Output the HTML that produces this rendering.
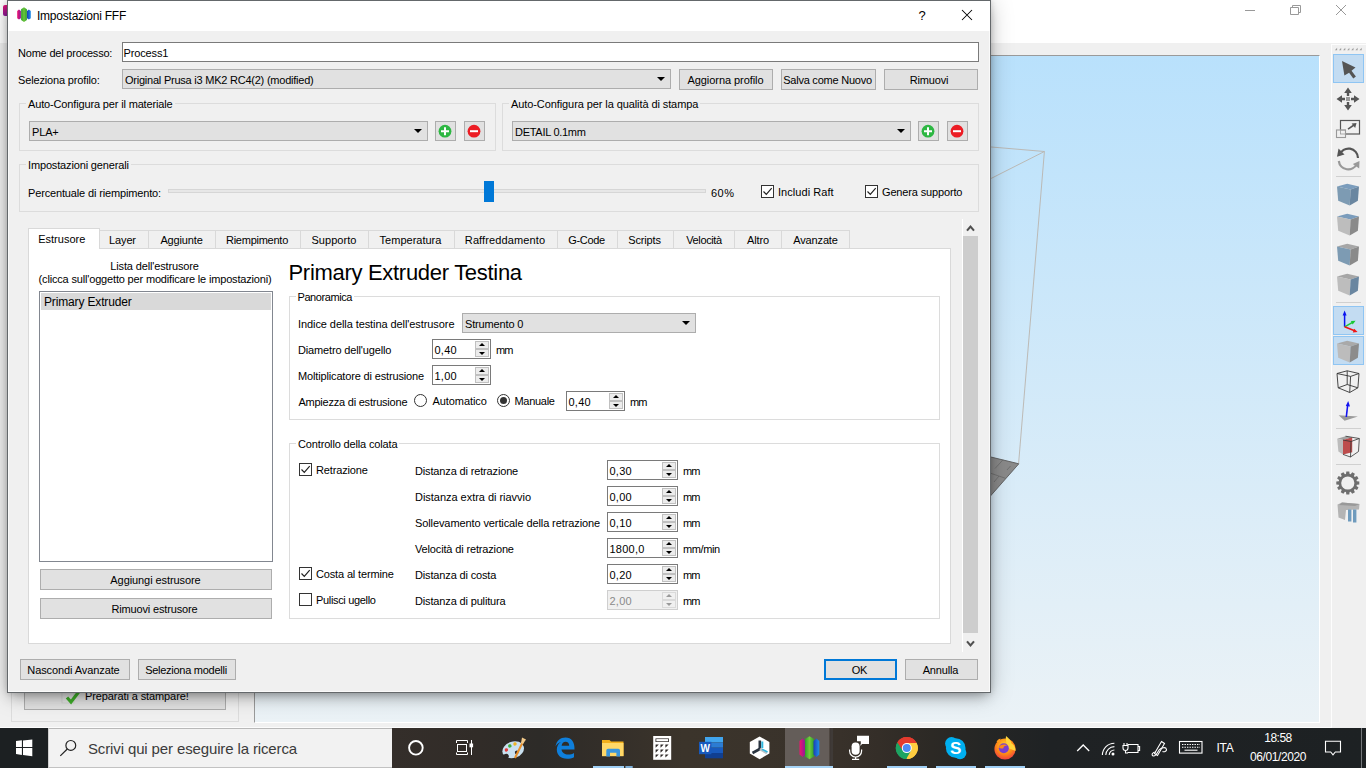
<!DOCTYPE html>
<html lang="it">
<head>
<meta charset="utf-8">
<title>Impostazioni FFF</title>
<style>
*{box-sizing:border-box;margin:0;padding:0}
html,body{width:1366px;height:768px;overflow:hidden;background:#f0f0f0}
body{font-family:"Liberation Sans",sans-serif;font-size:11px;letter-spacing:-0.15px;color:#000;position:relative}
.a{position:absolute}
.t{position:absolute;white-space:nowrap;line-height:14px;height:14px}
/* ---------- main window behind ---------- */
#mw-title{left:0;top:0;width:1366px;height:43px;background:#fff}
#mw-body{left:0;top:43px;width:1366px;height:685px;background:#f0f0f0;border-bottom:1px solid #fcfcfc}
#view{left:254px;top:55px;width:1066px;height:668px;border-top:1px solid #9a9a9a;border-left:1px solid #9a9a9a;border-right:1px solid #fff;border-bottom:1px solid #fff;background:linear-gradient(#b9e1fc,#ebf2f6)}
#rtb{left:1331px;top:44px;width:35px;height:684px;background:#f0f0f0;border-left:1px solid #fdfdfd;border-top:1px solid #fdfdfd}
.tbsel{position:absolute;left:1333px;width:31px;background:#c3dcf2;border:1px solid #8fc5f3}
.sep{position:absolute;left:1336px;width:26px;height:1px;background:#d2d2d2}
/* ---------- dialog ---------- */
#dlg{left:7px;top:0;width:984px;height:693px;border:1px solid #64686b;background:#f0f0f0;box-shadow:inset 0 0 0 1px #fafafa,0 0 6px rgba(0,0,0,.15),0 2px 22px rgba(0,0,0,.22),0 7px 12px -4px rgba(0,0,0,.25)}
#dlg-in{position:absolute;left:-8px;top:-1px;width:0;height:0}
#dlg-title{left:8px;top:1px;width:982px;height:30px;background:#fff}
.btn{position:absolute;height:21px;background:#e1e1e1;border:1px solid #adadad;text-align:center;line-height:19px;padding-top:1px;padding-right:2px;white-space:nowrap}
.combo{position:absolute;height:20px;background:#e1e1e1;border:1px solid #adadad;line-height:18px;padding-left:2px;padding-top:1px;white-space:nowrap}
.combo:after{content:"";position:absolute;right:5px;top:7px;border-left:4px solid transparent;border-right:4px solid transparent;border-top:4px solid #000}
.grp{position:absolute;border:1px solid #dcdcdc}
.grp>b{position:absolute;top:-7px;left:6px;font-weight:normal;background:#f0f0f0;padding:0 2px;line-height:14px;white-space:nowrap}
.wgrp>b{background:#fff}
.edit{position:absolute;height:20px;background:#fff;border:1px solid #7a7a7a;line-height:18px;padding-left:.6px;padding-top:1px;white-space:nowrap}
.spin{position:absolute;height:20px;background:#fff;border:1px solid #7a7a7a;line-height:18px;padding-left:1.5px;padding-top:1px;white-space:nowrap;letter-spacing:.25px}
.spin i{position:absolute;right:1px;width:14px;height:8px;background:#ececec;border:1px solid #c0c0c0}
.spin i.u{top:1px}
.spin i.d{top:9px}
.spin i.u:after{content:"";position:absolute;left:2.5px;top:1px;border-left:3.5px solid transparent;border-right:3.5px solid transparent;border-bottom:3.5px solid #000}
.spin i.d:after{content:"";position:absolute;left:2.5px;top:1.5px;border-left:3.5px solid transparent;border-right:3.5px solid transparent;border-top:3.5px solid #000}
.spin.dis{border-color:#cfcfcf;background:#f0f0f0;color:#8a8a8a}
.spin.dis i{background:#f0f0f0;border-color:#dadada}
.spin.dis i.u:after{border-bottom-color:#9a9a9a}
.spin.dis i.d:after{border-top-color:#9a9a9a}
.cb{position:absolute;width:13px;height:13px;background:#fff;border:1px solid #333}
.cb svg{position:absolute;left:0;top:0;width:11px;height:11px}
.rb{position:absolute;width:13px;height:13px;background:#fff;border:1px solid #333;border-radius:50%}
.rb.on:after{content:"";position:absolute;left:2px;top:2px;width:7px;height:7px;border-radius:50%;background:#333}
.tab{position:absolute;top:230px;height:19px;background:#f0f0f0;border:1px solid #d9d9d9;border-left:none;text-align:center;line-height:17px;padding-top:1px;white-space:nowrap}
.tab.sel{top:228px;height:21px;background:#fff;border-left:1px solid #d9d9d9;border-bottom:none;line-height:19px;z-index:2}
.ico{position:absolute;width:21px;height:20px;background:#e1e1e1;border:1px solid #adadad}
/* ---------- taskbar ---------- */
#tb{left:0;top:728px;width:1366px;height:40px;background:linear-gradient(90deg,#342e2a 0%,#342e2a 28.7%,#312c28 35%,#2d2b28 39.5%,#332e29 44%,#3b342b 50%,#3a332b 56%,#38312a 61.5%,#342e28 64.3%,#2c2925 68.2%,#252625 72%,#1f2224 76.9%,#1d2123 100%)}
#start{left:0;top:0;width:48px;height:40px;background:#1c2022}
#search{left:48px;top:0;width:344px;height:40px;background:#f2f2f2;border-top:1px solid #b8b8b8;border-bottom:1px solid #c2c2c2;border-left:1px solid #cfcfcf}
.ul{position:absolute;top:38px;height:2px;background:#8ec3ee}
.tbt{position:absolute;color:#fff;white-space:nowrap;font-size:12px;letter-spacing:-0.2px;text-align:center}
</style>
</head>
<body>
<!-- ================= main window (background) ================= -->
<div class="a" id="mw-title"></div>
<div class="a" id="mw-body"></div>
<div class="a" id="view"></div>
<div class="a" id="rtb"></div>
<svg class="a" style="left:1240px;top:0" width="126" height="30" viewBox="0 0 126 30"><g fill="none" stroke="#999" stroke-width="1">
<path d="M5 10.5H15"/><path d="M50.5 7.5H58.5V14.5H50.5Z"/><path d="M52.5 7.5V5.5H60.5V12.5H58.5"/><path d="M96 5L106 15M106 5L96 15"/></g></svg>
<div class="a" style="left:3px;top:5px;width:4px;height:11px;background:linear-gradient(#e0147a,#8a1a9a);border-radius:2px 0 0 2px"></div>
<div class="a" style="left:11px;top:560px;width:228px;height:162px;border:1px solid #dcdcdc"></div>
<div class="btn" style="left:24px;top:688px;width:202px;height:22px"></div>
<div class="t" style="left:85px;top:689px;letter-spacing:-0.1px">Preparati a stampare!</div>
<svg class="a" style="left:60px;top:688px" width="22" height="18" viewBox="0 0 22 18"><rect x="2" y="1" width="12" height="14" fill="#e4e4e4" stroke="#c8c8c8" stroke-width=".6"/><path d="M7 9.5 L11 14 L19 3.5" fill="none" stroke="#3fae2a" stroke-width="3.2"/></svg>


<svg class="a" style="left:0;top:0" width="1366" height="728" viewBox="0 0 1366 728">
<g fill="none" stroke="#bab4ae" stroke-width=".9"><path d="M990 146.9 L1044.4 151.5 L990 179"/><path d="M1044.4 151.5 L1018.6 463.5"/></g>
<polygon points="990,456.8 1018.8,463.8 990,496.5" fill="#8a8a8a" stroke="#5c5c5c" stroke-width=".9"/>
<g stroke="#666" stroke-width=".7" fill="none"><path d="M990 473 L1005.5 478.3M995 468.5 L1003 459.8M1007 470 L1010.5 466M994 482 L999 476"/></g>
<path d="M1334.9 50.2 l2.2 -2.4 v2.4z" fill="#9c9c9c"/><path d="M1339.0 50.2 l2.2 -2.4 v2.4z" fill="#9c9c9c"/><path d="M1343.1 50.2 l2.2 -2.4 v2.4z" fill="#9c9c9c"/><path d="M1347.2 50.2 l2.2 -2.4 v2.4z" fill="#9c9c9c"/><path d="M1351.3 50.2 l2.2 -2.4 v2.4z" fill="#9c9c9c"/><path d="M1355.4 50.2 l2.2 -2.4 v2.4z" fill="#9c9c9c"/><path d="M1359.5 50.2 l2.2 -2.4 v2.4z" fill="#9c9c9c"/>
<rect x="1333.5" y="54.5" width="30" height="28" fill="#c3dcf2" stroke="#8fc5f3"/>
<rect x="1333.5" y="306.5" width="30" height="28" fill="#c3dcf2" stroke="#8fc5f3"/>
<rect x="1333.5" y="336.5" width="30" height="28" fill="#c3dcf2" stroke="#8fc5f3"/>
<polygon points="1342,61 1355.5,67.6 1351.5,70.7 1355.9,76.5 1353.3,78.5 1349.1,72.8 1344.4,75.4" fill="#555"/>
<g fill="#555"><rect x="1346" y="97" width="4" height="4" fill="#9a9a9a"/><polygon points="1348,87.5 1351.8,93 1349.2,93 1349.2,96 1346.8,96 1346.8,93 1344.2,93"/><polygon points="1348,110.5 1351.8,105 1349.2,105 1349.2,102 1346.8,102 1346.8,105 1344.2,105"/><polygon points="1336.5,99 1342,95.2 1342,97.8 1345,97.8 1345,100.2 1342,100.2 1342,102.8"/><polygon points="1359.5,99 1354,95.2 1354,97.8 1351,97.8 1351,100.2 1354,100.2 1354,102.8"/></g>
<rect x="1340.5" y="120.5" width="19" height="13.5" fill="none" stroke="#555" stroke-width="1.2"/><rect x="1336.5" y="130" width="9" height="7.5" fill="#f0f0f0" stroke="#999" stroke-width="1.1"/><rect x="1340.5" y="130" width="5" height="4" fill="none" stroke="#999" stroke-width=".8"/><path d="M1348 129.2 L1354 125" stroke="#555" stroke-width="1.6"/><polygon points="1356.5,123 1355.2,128 1351.6,123.6" fill="#555"/>
<path d="M1339.5 155 A9.5 9.5 0 0 1 1358 158" fill="none" stroke="#555" stroke-width="2.2"/><polygon points="1337,156.8 1338.5,148.5 1344.5,154.5" fill="#555"/><path d="M1338.8 161 A9.5 9.5 0 0 0 1356.8 164" fill="none" stroke="#999" stroke-width="2.2"/><polygon points="1359.5,161 1359.2,168.5 1352.8,164" fill="#999"/>
<path d="M1336 176.5 H1361" stroke="#d0d0d0" stroke-width="1"/>
<path d="M1336 302.5 H1361" stroke="#d0d0d0" stroke-width="1"/>
<path d="M1336 428.5 H1361" stroke="#d0d0d0" stroke-width="1"/>
<path d="M1336 464.5 H1361" stroke="#d0d0d0" stroke-width="1"/>
<polygon points="1337.0,186.5 1347.2,183.8 1359.0,186.5 1350.6,189.4" fill="#7a9cbc"/><polygon points="1337.0,186.5 1350.6,189.4 1349.7,205.5 1338.2,200.8" fill="#7d9bb3"/><polygon points="1350.6,189.4 1359.0,186.5 1357.9,200.8 1349.7,205.5" fill="#6a86a0"/>
<polygon points="1337.0,216.5 1347.2,213.8 1359.0,216.5 1350.6,219.4" fill="#7a9cbc"/><polygon points="1337.0,216.5 1350.6,219.4 1349.7,235.5 1338.2,230.8" fill="#bdbdbd"/><polygon points="1350.6,219.4 1359.0,216.5 1357.9,230.8 1349.7,235.5" fill="#8a8a8a"/>
<polygon points="1337.0,246.5 1347.2,243.8 1359.0,246.5 1350.6,249.4" fill="#a6a6a6"/><polygon points="1337.0,246.5 1350.6,249.4 1349.7,265.5 1338.2,260.8" fill="#7d9bb3"/><polygon points="1350.6,249.4 1359.0,246.5 1357.9,260.8 1349.7,265.5" fill="#8a8a8a"/>
<polygon points="1337.0,276.5 1347.2,273.8 1359.0,276.5 1350.6,279.4" fill="#a6a6a6"/><polygon points="1337.0,276.5 1350.6,279.4 1349.7,295.5 1338.2,290.8" fill="#bdbdbd"/><polygon points="1350.6,279.4 1359.0,276.5 1357.9,290.8 1349.7,295.5" fill="#6a86a0"/>
<path d="M1344.6 326.8 V314" stroke="#0a14f0" stroke-width="1.5"/><polygon points="1344.6,310.5 1346.6,315.5 1342.6,315.5" fill="#0a14f0"/><path d="M1344.6 326.8 L1353 322.2" stroke="#19c832" stroke-width="1.5"/><polygon points="1355.6,320.8 1352.6,324.4 1350.9,320.9" fill="#19c832"/><path d="M1344.6 326.8 L1354.6 330.8" stroke="#f01414" stroke-width="1.5"/><polygon points="1357.6,332 1352.8,332.4 1354.2,328.8" fill="#f01414"/>
<polygon points="1337.0,343.5 1347.2,340.8 1359.0,343.5 1350.6,346.4" fill="#a9a9a9"/><polygon points="1337.0,343.5 1350.6,346.4 1349.7,362.5 1338.2,357.8" fill="#bcbcbc"/><polygon points="1350.6,346.4 1359.0,343.5 1357.9,357.8 1349.7,362.5" fill="#8c8c8c"/>
<path d="M1337.0 373.5 L1347.2 370.8M1347.2 370.8 L1359.0 373.5M1359.0 373.5 L1350.6 376.4M1350.6 376.4 L1337.0 373.5M1337.0 373.5 L1338.2 387.8M1338.2 387.8 L1349.7 392.5M1349.7 392.5 L1357.9 387.8M1357.9 387.8 L1359.0 373.5M1350.6 376.4 L1349.7 392.5M1347.2 370.8 L1347.2 384.5M1347.2 384.5 L1338.2 387.8M1347.2 384.5 L1357.9 387.8" fill="none" stroke="#333" stroke-width=".9"/>
<polygon points="1338.7,415.3 1357.9,416.6 1344.6,420.7" fill="#9a9a9a"/><path d="M1346.3 417 L1347.8 404" stroke="#1414f0" stroke-width="1.6"/><polygon points="1348.2,401 1350,406.4 1345.8,406" fill="#1414f0"/>
<polygon points="1337.2,438.8 1345.5,436.2 1352.2,437.2 1343,440" fill="#a2a2a2"/><polygon points="1337.2,438.8 1343,440 1343,454.4 1338.4,451.6" fill="#bcbcbc"/><polygon points="1343,440 1352.2,437.2 1352.2,452.2 1343,454.4" fill="#b53636" fill-opacity=".88"/><path d="M1345.5 436.2 L1359.3 438.5 L1351 441.5 L1343 440 M1359.3 438.5 L1358.5 451.5 L1350.5 457 L1343 454.4 M1351 441.5 L1350.5 457" fill="none" stroke="#333" stroke-width=".8"/>
<polygon points="1359.3,481.5 1359.3,484.5 1356.8,484.8 1356.5,485.9 1358.5,487.4 1357.0,490.1 1354.7,489.1 1353.9,489.9 1354.9,492.2 1352.2,493.7 1350.7,491.7 1349.6,492.0 1349.3,494.5 1346.3,494.5 1346.0,492.0 1344.9,491.7 1343.4,493.7 1340.7,492.2 1341.7,489.9 1340.9,489.1 1338.6,490.1 1337.1,487.4 1339.1,485.9 1338.8,484.8 1336.3,484.5 1336.3,481.5 1338.8,481.2 1339.1,480.1 1337.1,478.6 1338.6,475.9 1340.9,476.9 1341.7,476.1 1340.7,473.8 1343.4,472.3 1344.9,474.3 1346.0,474.0 1346.3,471.5 1349.3,471.5 1349.6,474.0 1350.7,474.3 1352.2,472.3 1354.9,473.8 1353.9,476.1 1354.7,476.9 1357.0,475.9 1358.5,478.6 1356.5,480.1 1356.8,481.2" fill="#6e6e6e"/><circle cx="1347.8" cy="483" r="6.6" fill="#f0f0f0"/>
<polygon points="1337.5,504.5 1342,502.5 1359.5,504 1359,509.5 1346,510 1345,520 1338.5,517.5" fill="#b4b4b4"/><polygon points="1342,502.5 1359.5,504 1355,506 1339,505" fill="#999"/><rect x="1348" y="509.5" width="3.4" height="12" fill="#6f9bbd"/><rect x="1353" y="509.5" width="3.4" height="13" fill="#6f9bbd"/>
</svg>
<!-- ================= dialog ================= -->
<div class="a" id="dlg"><div id="dlg-in">
<div class="a" id="dlg-title"></div>
<svg class="a" style="left:16px;top:6px" width="17" height="18" viewBox="0 0 17 18">
<defs><linearGradient id="gp" x1="0" x2="1"><stop offset="0" stop-color="#f0146e"/><stop offset="1" stop-color="#8a1a9a"/></linearGradient>
<linearGradient id="gg" x1="0" x2="1"><stop offset="0" stop-color="#2f9e2a"/><stop offset=".5" stop-color="#6cc63c"/><stop offset="1" stop-color="#2f9e2a"/></linearGradient>
<linearGradient id="gb" x1="0" x2="1"><stop offset="0" stop-color="#1b3fb5"/><stop offset="1" stop-color="#1f8fe8"/></linearGradient></defs>
<path d="M1.2 5 L3 3.6 L4.9 5 V12.2 L3 13.6 L1.2 12.2Z" fill="url(#gp)"/>
<path d="M5.1 3.2 L8 1.2 L10.9 3.2 V14 L8 16 L5.1 14Z" fill="url(#gg)"/>
<path d="M11 5 L12.9 3.6 L14.8 5 V12.2 L12.9 13.6 L11 12.2Z" fill="url(#gb)"/></svg>
<div class="t" style="left:917px;top:7.6px;font-size:13px;line-height:16px;width:10px;text-align:center;letter-spacing:0">?</div>
<svg class="a" style="left:961px;top:9px" width="12" height="12" viewBox="0 0 12 12"><path d="M1 1 L11 11 M11 1 L1 11" stroke="#000" stroke-width="1.05" fill="none"/></svg>
<div class="t" style="left:37px;top:8px;font-size:12px;line-height:16px;height:16px;letter-spacing:-0.23px">Impostazioni FFF</div>

<div class="t" style="left:18px;top:46px;letter-spacing:-0.2px">Nome del processo:</div>
<div class="edit" style="left:122px;top:42px;width:857px">Process1</div>
<div class="t" style="left:18px;top:73px">Seleziona profilo:</div>
<div class="combo" style="left:122px;top:69px;width:549px;letter-spacing:-.23px">Original Prusa i3 MK2 RC4(2) (modified)</div>
<div class="btn" style="left:679px;top:69px;width:94px;letter-spacing:-.06px;padding-right:1px">Aggiorna profilo</div>
<div class="btn" style="left:781px;top:69px;width:95px;letter-spacing:-.23px">Salva come Nuovo</div>
<div class="btn" style="left:884px;top:69px;width:94px;padding-right:4px">Rimuovi</div>

<div class="grp" style="left:19px;top:103px;width:477px;height:48px"><b>Auto-Configura per il materiale</b></div>
<div class="combo" style="left:29px;top:121px;width:399px">PLA+</div>
<div class="ico" style="left:435px;top:121px"><svg width="19" height="18" viewBox="0 0 19 18" style="position:absolute;left:0;top:0"><circle cx="9" cy="9.2" r="6.4" fill="#2db742"/><path d="M5 9.2H13M9 5.2V13.2" stroke="#fff" stroke-width="2"/></svg></div>
<div class="ico" style="left:464px;top:121px"><svg width="19" height="18" viewBox="0 0 19 18" style="position:absolute;left:0;top:0"><circle cx="9" cy="9.2" r="6.4" fill="#ec1c24"/><path d="M5 9.2H13" stroke="#fff" stroke-width="2"/></svg></div>

<div class="grp" style="left:502px;top:103px;width:477px;height:48px"><b style="letter-spacing:-.09px">Auto-Configura per la qualità di stampa</b></div>
<div class="combo" style="left:512px;top:121px;width:399px;letter-spacing:-.28px">DETAIL 0.1mm</div>
<div class="ico" style="left:918px;top:121px"><svg width="19" height="18" viewBox="0 0 19 18" style="position:absolute;left:0;top:0"><circle cx="9" cy="9.2" r="6.4" fill="#2db742"/><path d="M5 9.2H13M9 5.2V13.2" stroke="#fff" stroke-width="2"/></svg></div>
<div class="ico" style="left:947px;top:121px"><svg width="19" height="18" viewBox="0 0 19 18" style="position:absolute;left:0;top:0"><circle cx="9" cy="9.2" r="6.4" fill="#ec1c24"/><path d="M5 9.2H13" stroke="#fff" stroke-width="2"/></svg></div>

<div class="grp" style="left:19px;top:164px;width:960px;height:48px"><b>Impostazioni generali</b></div>
<div class="t" style="left:28px;top:186px">Percentuale di riempimento:</div>
<div class="a" style="left:168px;top:189px;width:538px;height:4px;background:#e7e7e7;border:1px solid #d6d6d6"></div>
<div class="a" style="left:484px;top:181px;width:10px;height:21px;background:#0078d7"></div>
<div class="t" style="left:711px;top:186px;letter-spacing:.5px">60%</div>
<div class="cb" style="left:761px;top:185px"><svg viewBox="0 0 11 11"><path d="M1.5 5.5 L4.3 8.3 L9.7 2.2" fill="none" stroke="#222" stroke-width="1.2"/></svg></div>
<div class="t" style="left:778px;top:185px;letter-spacing:.05px">Includi Raft</div>
<div class="cb" style="left:865px;top:185px"><svg viewBox="0 0 11 11"><path d="M1.5 5.5 L4.3 8.3 L9.7 2.2" fill="none" stroke="#222" stroke-width="1.2"/></svg></div>
<div class="t" style="left:882px;top:185px">Genera supporto</div>

<!-- tabs -->
<div class="a" style="left:28px;top:248px;width:923px;height:396px;background:#fff;border:1px solid #d9d9d9"></div>
<div class="tab sel" style="left:28px;width:72px;padding-right:4.5px;letter-spacing:0">Estrusore</div>
<div class="tab" style="left:100px;width:49px;padding-right:3px">Layer</div>
<div class="tab" style="left:149px;width:67px;padding-right:1px">Aggiunte</div>
<div class="tab" style="left:216px;width:85px;padding-right:2px;letter-spacing:-.25px">Riempimento</div>
<div class="tab" style="left:301px;width:68px;padding-right:1px;letter-spacing:.05px">Supporto</div>
<div class="tab" style="left:369px;width:86px;padding-right:2px;letter-spacing:0">Temperatura</div>
<div class="tab" style="left:455px;width:103px;padding-right:2px;letter-spacing:.12px">Raffreddamento</div>
<div class="tab" style="left:558px;width:60px;padding-right:2px;letter-spacing:-.36px">G-Code</div>
<div class="tab" style="left:618px;width:56px;padding-right:2px">Scripts</div>
<div class="tab" style="left:674px;width:61px;letter-spacing:-.37px">Velocità</div>
<div class="tab" style="left:735px;width:47px">Altro</div>
<div class="tab" style="left:782px;width:68px">Avanzate</div>

<!-- scrollbar -->
<div class="a" style="left:962px;top:219px;width:16px;height:433px;background:#f0f0f0;border-left:1px solid #fff"></div>
<div class="a" style="left:963px;top:236px;width:15px;height:397px;background:#cdcdcd"></div>
<svg class="a" style="left:962px;top:220px" width="16" height="16" viewBox="0 0 16 16"><path d="M5 10.6 L8.5 6.6 L12 10.6" fill="none" stroke="#505050" stroke-width="2.1"/></svg>
<svg class="a" style="left:962px;top:636px" width="16" height="16" viewBox="0 0 16 16"><path d="M5 5.4 L8.5 9.4 L12 5.4" fill="none" stroke="#505050" stroke-width="2.1"/></svg>

<!-- left column -->
<div class="t" style="left:38px;top:259px;width:233px;text-align:center">Lista dell'estrusore</div>
<div class="t" style="left:39px;top:272px;left:38.6px;letter-spacing:-0.17px">(clicca sull'oggetto per modificare le impostazioni)</div>
<div class="a" style="left:39px;top:291px;width:234px;height:271px;background:#fff;border:1px solid #828790"></div>
<div class="a" style="left:41px;top:293px;width:230px;height:17px;background:#d9d9d9"></div>
<div class="t" style="left:44px;top:295px;font-size:12px;line-height:15px">Primary Extruder</div>
<div class="btn" style="left:40px;top:569px;width:232px;padding-right:1px;letter-spacing:-.08px">Aggiungi estrusore</div>
<div class="btn" style="left:40px;top:598px;width:232px;padding-right:3px">Rimuovi estrusore</div>

<!-- right column -->
<div class="t" style="left:288.5px;top:260px;font-size:22px;line-height:26px;height:26px;letter-spacing:-0.3px">Primary Extruder Testina</div>

<div class="grp wgrp" style="left:289px;top:296px;width:651px;height:124px"><b style="letter-spacing:-.42px;left:5.5px;top:-7px">Panoramica</b></div>
<div class="t" style="left:298px;top:317px;letter-spacing:-.08px">Indice della testina dell'estrusore</div>
<div class="combo" style="left:462px;top:313px;width:234px">Strumento 0</div>
<div class="t" style="left:298px;top:343px">Diametro dell'ugello</div>
<div class="spin" style="left:432px;top:339px;width:59px">0,40<i class="u"></i><i class="d"></i></div>
<div class="t" style="left:496px;top:343px;letter-spacing:-1px">mm</div>
<div class="t" style="left:298px;top:369px">Moltiplicatore di estrusione</div>
<div class="spin" style="left:432px;top:365px;width:59px">1,00<i class="u"></i><i class="d"></i></div>
<div class="t" style="left:298.4px;top:395px;letter-spacing:-.22px">Ampiezza di estrusione</div>
<div class="rb" style="left:414px;top:394px"></div>
<div class="t" style="left:432.5px;top:394px;letter-spacing:-.08px">Automatico</div>
<div class="rb on" style="left:497px;top:394px"></div>
<div class="t" style="left:514.5px;top:394px;letter-spacing:-.3px">Manuale</div>
<div class="spin" style="left:566px;top:391px;width:59px">0,40<i class="u"></i><i class="d"></i></div>
<div class="t" style="left:630px;top:395px;letter-spacing:-1px">mm</div>

<div class="grp wgrp" style="left:289px;top:443px;width:651px;height:176px"><b>Controllo della colata</b></div>
<div class="cb" style="left:299px;top:463px"><svg viewBox="0 0 11 11"><path d="M1.5 5.5 L4.3 8.3 L9.7 2.2" fill="none" stroke="#222" stroke-width="1.2"/></svg></div>
<div class="t" style="left:316px;top:463px">Retrazione</div>
<div class="t" style="left:415px;top:464px">Distanza di retrazione</div>
<div class="spin" style="left:607px;top:460px;width:71px">0,30<i class="u"></i><i class="d"></i></div>
<div class="t" style="left:683px;top:464px;letter-spacing:-1px">mm</div>
<div class="t" style="left:415px;top:490px;letter-spacing:-.03px">Distanza extra di riavvio</div>
<div class="spin" style="left:607px;top:486px;width:71px">0,00<i class="u"></i><i class="d"></i></div>
<div class="t" style="left:683px;top:490px;letter-spacing:-1px">mm</div>
<div class="t" style="left:415px;top:516px;letter-spacing:-.1px">Sollevamento verticale della retrazione</div>
<div class="spin" style="left:607px;top:512px;width:71px">0,10<i class="u"></i><i class="d"></i></div>
<div class="t" style="left:683px;top:516px;letter-spacing:-1px">mm</div>
<div class="t" style="left:415px;top:542px">Velocità di retrazione</div>
<div class="spin" style="left:607px;top:538px;width:71px">1800,0<i class="u"></i><i class="d"></i></div>
<div class="t" style="left:683px;top:542px;letter-spacing:-.4px">mm/min</div>
<div class="cb" style="left:299px;top:567px"><svg viewBox="0 0 11 11"><path d="M1.5 5.5 L4.3 8.3 L9.7 2.2" fill="none" stroke="#222" stroke-width="1.2"/></svg></div>
<div class="t" style="left:316px;top:567px">Costa al termine</div>
<div class="t" style="left:415px;top:568px">Distanza di costa</div>
<div class="spin" style="left:607px;top:564px;width:71px">0,20<i class="u"></i><i class="d"></i></div>
<div class="t" style="left:683px;top:568px;letter-spacing:-1px">mm</div>
<div class="cb" style="left:299px;top:593px"></div>
<div class="t" style="left:316px;top:593px;letter-spacing:-.33px">Pulisci ugello</div>
<div class="t" style="left:415px;top:594px">Distanza di pulitura</div>
<div class="spin dis" style="left:607px;top:590px;width:71px">2,00<i class="u"></i><i class="d"></i></div>
<div class="t" style="left:683px;top:594px;letter-spacing:-1px">mm</div>

<!-- bottom buttons -->
<div class="btn" style="left:20px;top:659px;width:110px;padding-right:3px;letter-spacing:-.1px">Nascondi Avanzate</div>
<div class="btn" style="left:138px;top:659px;width:98px;letter-spacing:-.27px">Seleziona modelli</div>
<div class="btn" style="left:824px;top:659px;width:73px;border:2px solid #0078d7;line-height:17px">OK</div>
<div class="btn" style="left:905px;top:659px;width:73px">Annulla</div>
</div></div>

<!-- ================= taskbar ================= -->
<div class="a" id="tb">
<div class="a" id="start"></div>
<div class="a" id="search"></div>
<svg class="a" style="left:0;top:0" width="1366" height="40" viewBox="0 728 1366 40">
<defs><linearGradient id="tp" x1="0" x2="1"><stop offset="0" stop-color="#f0146e"/><stop offset="1" stop-color="#8a1a9a"/></linearGradient><linearGradient id="tg" x1="0" x2="1"><stop offset="0" stop-color="#2f9e2a"/><stop offset=".5" stop-color="#72cc3c"/><stop offset="1" stop-color="#2f9e2a"/></linearGradient><linearGradient id="tbl" x1="0" x2="1"><stop offset="0" stop-color="#1b3fb5"/><stop offset="1" stop-color="#1f8fe8"/></linearGradient><radialGradient id="ff" cx=".5" cy=".35" r=".7"><stop offset="0" stop-color="#ffe226"/><stop offset=".55" stop-color="#ff8a16"/><stop offset="1" stop-color="#f0304a"/></radialGradient></defs>
<g fill="#fff"><polygon points="16,741.1 21.9,740.3 21.9,747.1 16,747.1"/><polygon points="23,740.4 32.3,739.5 32.3,747.1 23,747.1"/><polygon points="16,748.1 21.9,748.1 21.9,754.9 16,754.1"/><polygon points="23,748.1 32.3,748.1 32.3,756.3 23,755.1"/></g>
<circle cx="70.8" cy="745.4" r="4.9" fill="none" stroke="#222" stroke-width="1.2"/><path d="M67.3 749 L60.3 755.9" stroke="#222" stroke-width="1.2"/>
<circle cx="415.9" cy="747.8" r="6.8" fill="none" stroke="#fff" stroke-width="1.9"/>
<g fill="none" stroke="#fff" stroke-width="1"><rect x="457.5" y="744.5" width="9" height="7"/><path d="M456.5 743 V740.5 H467.5 V743 M456.5 752.5 V754.5 H467.5 V752.5 M471.5 740 V755"/></g><rect x="469.5" y="743.5" width="3.6" height="3.8" fill="#fff"/>
<g transform="rotate(-18 514 749)"><ellipse cx="513" cy="749.5" rx="11" ry="8.2" fill="#c9e0f0"/><circle cx="515.5" cy="753" r="1.8" fill="#2c2725"/><ellipse cx="504" cy="753.5" rx="3" ry="2.4" fill="#2c2725"/><circle cx="506.5" cy="747.5" r="1.7" fill="#e23b3b"/><circle cx="511" cy="744.8" r="1.7" fill="#3fae3f"/><circle cx="516.5" cy="744.5" r="1.7" fill="#f0b323"/></g>
<path d="M522.8 742 L515 758" stroke="#e8902a" stroke-width="2"/><path d="M522 737.5 L526 739.5 L523 744 L521 743 Z" fill="#f2c98a"/>
<path d="M555.5 746.5 C556.5 740.5 560.5 737.5 565.5 737.5 C571.5 737.5 574.8 742 574.5 749.5 H561.5 C562 753 565 754.5 568 754.5 C570.5 754.5 572.5 754 574 753 V757.3 C572 758.3 569.8 758.8 567 758.8 C560.8 758.8 556.8 754.8 556.8 749.5 C556.8 746.2 558.5 743.5 561 742 C558.5 742.5 556.5 744.5 555.5 746.5 Z M561.6 745.8 H569.2 C569.2 743.3 567.8 741.8 565.6 741.8 C563.4 741.8 562 743.4 561.6 745.8Z" fill="#0f7fdb" fill-rule="evenodd"/>
<path d="M602 740 H609.5 L611 741.5 H623.5 V756 H602Z" fill="#f3b01c"/><rect x="602" y="743" width="21.5" height="13.2" fill="#ffd868"/><path d="M606.3 756.4 V750.5 Q606.3 748.7 608 748.7 H618.3 Q620 748.7 620 750.5 V756.4 H616.4 V752.7 H610 V756.4Z" fill="#3a96dd"/>
<rect x="653.2" y="736" width="18" height="23.8" fill="#fff"/><rect x="655.5" y="738.4" width="13.4" height="3.6" fill="#2c2725"/><rect x="656.3" y="739.1" width="11.8" height="2.2" fill="#fff"/>
<path d="M655.6 744.6 h3.2 l-3.2 3.2z" fill="#2c2725"/>
<path d="M660.5 744.6 h3.2 l-3.2 3.2z" fill="#2c2725"/>
<path d="M665.4 744.6 h3.2 l-3.2 3.2z" fill="#2c2725"/>
<path d="M655.6 749.5 h3.2 l-3.2 3.2z" fill="#2c2725"/>
<path d="M660.5 749.5 h3.2 l-3.2 3.2z" fill="#2c2725"/>
<path d="M665.4 749.5 h3.2 l-3.2 3.2z" fill="#2c2725"/>
<path d="M655.6 754.4 h3.2 l-3.2 3.2z" fill="#2c2725"/>
<path d="M660.5 754.4 h3.2 l-3.2 3.2z" fill="#2c2725"/>
<path d="M665.4 754.4 h3.2 l-3.2 3.2z" fill="#2c2725"/>
<rect x="705" y="737" width="18" height="5.4" fill="#41a5ee"/><rect x="705" y="742.4" width="18" height="5.3" fill="#2b7cd3"/><rect x="705" y="747.7" width="18" height="5.3" fill="#185abd"/><rect x="705" y="753" width="18" height="5.3" fill="#103f91"/><rect x="699" y="741.8" width="12.4" height="12.4" fill="#185abd"/>
<text x="705.2" y="752" font-family="Liberation Sans,sans-serif" font-weight="bold" font-size="10" fill="#fff" text-anchor="middle">W</text>
<polygon points="759.6,736.5 769.4,742 769.4,753.6 759.6,759.2 749.8,753.6 749.8,742" fill="#fff"/><path d="M759.8 749 V740.5" stroke="#2a3440" stroke-width="2.6"/><path d="M759.8 749 L752.5 753" stroke="#2a3440" stroke-width="2.6"/><path d="M760 749 L767 753" stroke="#b9c2c8" stroke-width="2.6"/><path d="M762.3 748 V741.5" stroke="#2fb6de" stroke-width="2"/><path d="M762 749.2 L767.5 752" stroke="#2fb6de" stroke-width="1.6"/>
<rect x="785" y="728" width="44.5" height="40" fill="#645d59"/><rect x="830.2" y="728" width="2.8" height="40" fill="#3f3a37"/>
<path d="M799.5 741 L802.5 738.5 L805.5 741 V754.5 L802.5 757 L799.5 754.5Z" fill="url(#tp)"/><path d="M805 739 L809.5 736.2 L814 739 V756.5 L809.5 759.2 L805 756.5Z" fill="url(#tg)"/><path d="M813.5 741 L816.5 738.5 L819.3 741 V754.5 L816.5 757 L813.5 754.5Z" fill="url(#tbl)"/>
<rect x="851.6" y="742.4" width="8" height="12.4" rx="3.8" fill="#fff"/><path d="M849.6 749.5 V751 A6 6 0 0 0 861.6 751 V749.5" fill="none" stroke="#fff" stroke-width="1.2"/><path d="M855.6 757 V759.2 M852 759.4 H859.2" stroke="#fff" stroke-width="1.3"/><path d="M857 735.8 H869 V744 H862 L860.5 746 V744 H860.8 V741.2 H857Z" fill="#fff"/>
<path d="M906.8 748.1 L897.27 742.6 A11 11 0 0 1 916.33 742.6 L911.1 745.6Z" fill="#e33b2e"/><path d="M906.8 748.1 L911.1 745.6 L916.33 742.6 A11 11 0 0 1 906.8 759.1 L906.8 753.1Z" fill="#ffcd40"/><path d="M906.8 748.1 L906.8 759.1 A11 11 0 0 1 897.27 742.6 Z" fill="#1da462"/><path d="M906.8 743.1 H916.6 A11 11 0 0 0 897.27 742.6 L902.5 750.6Z" fill="#e33b2e"/><path d="M911.1 750.6 L906.2 759.08 A11 11 0 0 0 916.6 743.1 H906.8Z" fill="#ffcd40"/><path d="M902.5 750.6 L897.27 742.6 A11 11 0 0 0 906.2 759.08 L911.1 750.6Z" fill="#1da462"/><circle cx="906.8" cy="748.1" r="5" fill="#fff"/><circle cx="906.8" cy="748.1" r="4" fill="#4c8bf5"/>
<circle cx="951.5" cy="743.5" r="6.4" fill="#00aff0"/><circle cx="960" cy="752.8" r="6.4" fill="#00aff0"/><circle cx="955.7" cy="748" r="9.8" fill="#00aff0"/><text x="955.7" y="754" font-family="Liberation Sans,sans-serif" font-weight="bold" font-size="17" fill="#fff" text-anchor="middle">S</text>
<circle cx="1005" cy="749" r="10.6" fill="url(#ff)"/><path d="M1006 736 C1009 738 1011 741 1011.5 743.5 C1014 744.5 1015.8 748 1015.6 751 L1008 748 C1007 744 1005 740 1006 736Z" fill="#ffd43a"/><path d="M996.5 742 C997.5 740 999 739 1000.5 738.6 C1000 740 1000.4 741.3 1001.2 742.3Z" fill="#ff9a1c"/><circle cx="1003.8" cy="748.3" r="5" fill="#7a3fd0"/><path d="M999 747 C1001 744.2 1005 744 1007.5 745.6 C1005 745.4 1003.5 746.6 1003.4 748.2 C1001.5 748.8 999.5 748.4 999 747Z" fill="#ff8a16"/>
<rect x="593" y="766" width="31" height="2" fill="#9fcff5"/>
<rect x="625.4" y="766" width="7.300000000000068" height="2" fill="#7fb0d8"/>
<rect x="785" y="766" width="48" height="2" fill="#a6d4f7"/>
<rect x="887" y="766" width="40" height="2" fill="#9fcff5"/>
<rect x="936" y="766" width="40" height="2" fill="#9fcff5"/>
<rect x="985" y="766" width="40" height="2" fill="#9fcff5"/>
<path d="M1077.2 751 L1083.2 745 L1089.2 751" fill="none" stroke="#fff" stroke-width="1.3"/>
<g fill="none" stroke="#fff" stroke-width="1.1"><path d="M1102.4 755 A12 12 0 0 1 1114.4 743.2"/><path d="M1105.8 755 A8.6 8.6 0 0 1 1114.4 746.6"/><path d="M1109.2 755 A5.2 5.2 0 0 1 1114.4 750"/></g><circle cx="1113" cy="753.9" r="1.5" fill="#fff"/>
<g fill="none" stroke="#fff" stroke-width="1.1"><path d="M1127.5 744.5 H1138 V752.5 H1127.5"/><path d="M1138 746.5 H1139.6 V750.5 H1138"/><path d="M1124 743 V745.5 M1127 743 V745.5 M1123 745.5 H1128 V748 A2.5 2.5 0 0 1 1123 748Z M1125.5 750.5 V753 H1128"/></g>
<g fill="none" stroke="#fff" stroke-width="1.1"><path d="M1161.5 741.5 L1164.5 743.5 L1157.5 755.5 L1154.5 753.5Z"/><path d="M1156 752 C1152 752 1151 755.5 1153.5 756 C1156 756.3 1157 753 1159 750 C1161 747.5 1166 746.5 1166.5 749.5 C1166.8 751.5 1164 752 1162.5 751.5"/></g>
<rect x="1179.5" y="741.5" width="22.5" height="11.6" fill="none" stroke="#fff" stroke-width="1.1"/><path d="M1182 744.5 H1200 M1182 747.2 H1200" stroke="#fff" stroke-width="1.1" stroke-dasharray="1.4 1.1"/><path d="M1184.5 750.2 H1197.5" stroke="#fff" stroke-width="1.1"/>
<path d="M1325.5 741.2 H1340.5 V752 H1335.3 L1333 754.8 L1330.7 752 H1325.5Z" fill="none" stroke="#fff" stroke-width="1.1"/>
<path d="M1361.5 728 V768" stroke="#74777a" stroke-width="1"/>
</svg>
<div class="tbt" style="left:1205px;top:741px;width:40px;margin-top:-728px;line-height:14px">ITA</div>
<div class="tbt" style="left:1248px;top:731px;width:60px;margin-top:-728px;line-height:14px;letter-spacing:-0.55px">18:58</div>
<div class="tbt" style="left:1248px;top:750px;width:60px;margin-top:-728px;line-height:14px;letter-spacing:-0.4px">06/01/2020</div>
<div class="t" style="left:88px;top:11px;font-size:15px;line-height:20px;height:20px;letter-spacing:-0.13px;color:#3b3b3b">Scrivi qui per eseguire la ricerca</div>
</div>
</body>
</html>
